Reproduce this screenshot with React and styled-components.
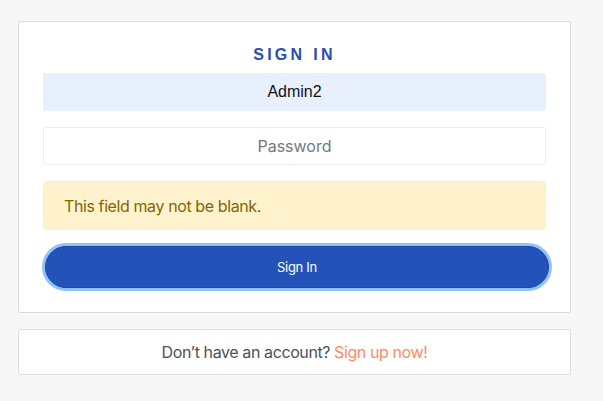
import React from "react";
import styled, { createGlobalStyle } from "styled-components";

const GlobalStyle = createGlobalStyle`
  html, body {
    margin: 0;
    padding: 0;
    background-color: #f7f7f7;
  }
  body {
    font-family: Inter, "Noto Sans", Arial, sans-serif;
  }
`;

const Page = styled.div`
  padding: 21px 0 0 18px;
  width: 553px;
  display: flex;
  flex-direction: column;
  gap: 16px;
`;

const Card = styled.div`
  background-color: #fff;
  border: 1px solid #dcdcdc;
  border-radius: 2px;
  padding: ${(p) => p.$pad || "0"};
  display: flex;
  flex-direction: column;
`;

const Title = styled.h2`
  margin: 0 0 9px;
  padding-top: 24px;
  line-height: 18px;
  text-align: center;
  font-family: "Liberation Sans", Arial, sans-serif;
  font-size: 16px;
  font-weight: 700;
  letter-spacing: 3.3px;
  color: #2a4cb3;
`;

const Input = styled.input`
  box-sizing: border-box;
  width: 100%;
  height: 38px;
  margin: 0;
  border: 1px solid ${(p) => (p.$filled ? "#e8f0fe" : "#eceff3")};
  border-radius: 2px;
  background-color: ${(p) => (p.$filled ? "#e8f0fe" : "#fff")};
  text-align: center;
  font-size: 16px;
  font-family: ${(p) =>
    p.$filled ? '"Liberation Sans", Arial, sans-serif' : 'Inter, "Noto Sans", sans-serif'};
  color: #111;
  outline: none;

  &::placeholder {
    color: #737880;
  }
`;

const Form = styled.form`
  display: flex;
  flex-direction: column;
`;

const Alert = styled.div`
  box-sizing: border-box;
  height: 49px;
  margin-top: 16px;
  padding: 0 20px;
  display: flex;
  align-items: center;
  background-color: #fff3cd;
  border: 1px solid #ffeeba;
  border-radius: 4px;
  color: #856404;
  font-size: 16px;
  letter-spacing: -0.4px;
`;

const Button = styled.button`
  box-sizing: border-box;
  width: 504px;
  height: 42px;
  margin: 16px 0 0 2px;
  border: 1px solid #1c44a3;
  border-radius: 21px;
  background-color: #2353b9;
  box-shadow: 0 0 0 3px #90c2f8;
  color: #fff;
  font-family: Inter, "Noto Sans", sans-serif;
  font-size: 13px;
  letter-spacing: -0.3px;
  cursor: pointer;
`;

const Footer = styled.p`
  margin: 0;
  height: 44px;
  display: flex;
  align-items: center;
  justify-content: center;
  gap: 4px;
  font-size: 16px;
  letter-spacing: -0.4px;
  color: #4d5159;
`;

const Link = styled.a`
  color: #ff8a5f;
  text-decoration: none;
`;

export default function App() {
  return (
    <>
      <GlobalStyle />
      <Page>
        <Card $pad="0 24px 24px 24px">
          <Title>SIGN IN</Title>
          <Form onSubmit={(e) => e.preventDefault()}>
            <Input $filled defaultValue="Admin2" />
            <Input
              type="password"
              placeholder="Password"
              style={{ marginTop: 16 }}
            />
            <Alert>This field may not be blank.</Alert>
            <Button type="submit">Sign In</Button>
          </Form>
        </Card>
        <Card>
          <Footer>
            Don’t have an account?<Link href="#">Sign up now!</Link>
          </Footer>
        </Card>
      </Page>
    </>
  );
}
